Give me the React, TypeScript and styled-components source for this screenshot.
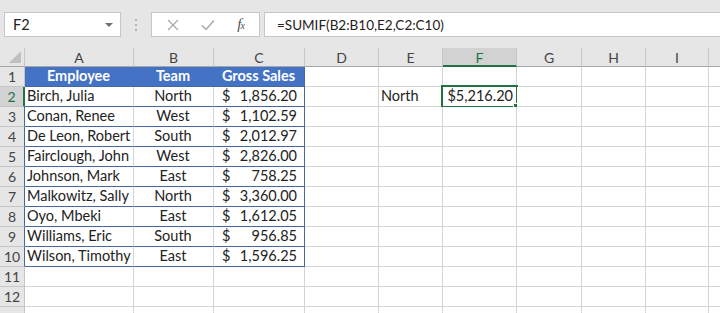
import { Fragment } from 'react';
import styled, { createGlobalStyle } from 'styled-components';

const GlobalStyle = createGlobalStyle`
  html, body {
    margin: 0;
    padding: 0;
    background: #ffffff;
    overflow: hidden;
  }
  body {
    font-family: Lato, "Open Sans", "Liberation Sans", sans-serif;
    color: #222;
  }
`;

const GRID = '#d4d4d4';
const HEAD_LINE = '#c6c6c6';
const TABLE_LINE = '#44699f';
const GREEN = '#217346';

const Window = styled.div`
  width: 720px;
  height: 313px;
  overflow: hidden;
  background: #fff;
`;

const Toolbar = styled.div`
  display: flex;
  align-items: stretch;
  height: 48px;
  box-sizing: border-box;
  padding: 12px 0 11px 4px;
  background: #e6e6e6;
`;

const NameBox = styled.div`
  width: 117px;
  box-sizing: border-box;
  display: flex;
  align-items: center;
  justify-content: space-between;
  padding: 0 7px 0 8px;
  background: #fff;
  border: 1px solid #c6c6c6;
  font-size: 14.5px;
`;

const Caret = styled.span`
  width: 0;
  height: 0;
  border-left: 4px solid transparent;
  border-right: 4px solid transparent;
  border-top: 4px solid #707070;
  margin-top: 1px;
`;

const Grip = styled.div`
  width: 30px;
  display: flex;
  flex-direction: column;
  align-items: center;
  justify-content: center;
  gap: 3px;
`;

const GripDot = styled.span`
  width: 2px;
  height: 2px;
  background: #b4b4b4;
`;

const FxBox = styled.div`
  width: 109px;
  box-sizing: border-box;
  display: flex;
  align-items: center;
  justify-content: space-around;
  padding: 0 4px;
  background: #fff;
  border: 1px solid #c6c6c6;
  margin-right: 4px;
`;

const FxLabel = styled.span`
  font-family: "Liberation Serif", serif;
  font-style: italic;
  font-size: 15px;
  color: #505050;
  letter-spacing: -1px;
  small {
    font-size: 10px;
  }
`;

const FormulaInput = styled.div`
  flex: 1;
  display: flex;
  align-items: center;
  padding-left: 12px;
  background: #fff;
  border: 1px solid #c6c6c6;
  border-right: none;
  font-size: 13.5px;
`;

const Sheet = styled.div`
  display: grid;
  grid-template-columns: 25px 109px 80px 91px 74px 64px 74px 65px 64px 63px 64px;
  grid-template-rows: 19px repeat(13, 20px);
`;

const Corner = styled.div`
  position: relative;
  background: #e6e6e6;
  border-right: 1px solid ${HEAD_LINE};
  border-bottom: 1px solid #a6a6a6;
  box-sizing: border-box;
  svg {
    position: absolute;
    right: 3px;
    bottom: 3px;
  }
`;

const ColHeader = styled.div<{ $active?: boolean }>`
  box-sizing: border-box;
  display: flex;
  align-items: center;
  justify-content: center;
  font-size: 14px;
  background: ${({ $active }) => ($active ? '#d2d2d2' : '#e6e6e6')};
  color: ${({ $active }) => ($active ? GREEN : '#444')};
  border-right: 1px solid ${HEAD_LINE};
  border-bottom: ${({ $active }) => ($active ? `2px solid ${GREEN}` : '1px solid #a6a6a6')};
  padding-top: ${({ $active }) => ($active ? '1px' : '0')};
`;

const RowHeader = styled.div<{ $active?: boolean; $edge?: boolean }>`
  box-sizing: border-box;
  display: flex;
  align-items: center;
  justify-content: center;
  font-size: 14px;
  background: ${({ $active }) => ($active ? '#d2d2d2' : '#e6e6e6')};
  color: ${({ $active }) => ($active ? GREEN : '#444')};
  border-bottom: 1px solid ${HEAD_LINE};
  border-right: ${({ $active, $edge }) =>
    $active ? `2px solid ${GREEN}` : `1px solid ${$edge ? TABLE_LINE : HEAD_LINE}`};
`;

type Tone = 'plain' | 'head' | 'body';

const Cell = styled.div<{ $align?: 'left' | 'center' | 'right'; $tone?: Tone; $edge?: boolean }>`
  position: relative;
  box-sizing: border-box;
  display: flex;
  align-items: flex-end;
  justify-content: ${({ $align }) =>
    $align === 'center' ? 'center' : $align === 'right' ? 'flex-end' : 'flex-start'};
  padding: 0 3px 1px 2px;
  font-size: 14.5px;
  line-height: 18px;
  white-space: nowrap;
  overflow: visible;
  background: ${({ $tone }) => ($tone === 'head' ? '#4472c4' : '#fff')};
  color: ${({ $tone }) => ($tone === 'head' ? '#fff' : '#222')};
  font-weight: ${({ $tone }) => ($tone === 'head' ? 700 : 400)};
  border-bottom: 1px solid ${({ $tone }) => ($tone === 'body' || $tone === 'head' ? TABLE_LINE : GRID)};
  border-right: 1px solid ${({ $edge, $tone }) => ($edge ? TABLE_LINE : $tone === 'head' ? '#4472c4' : GRID)};
`;

const Money = styled.div`
  flex: 1;
  display: flex;
  justify-content: space-between;
  padding: 0 4px 0 6px;
`;

const Selection = styled.div`
  position: absolute;
  left: -2px;
  top: -2px;
  right: -2px;
  bottom: -2px;
  border: 2px solid ${GREEN};
  pointer-events: none;
`;

const FillHandle = styled.span`
  position: absolute;
  right: -4px;
  bottom: -4px;
  width: 5px;
  height: 5px;
  background: ${GREEN};
  border: 1px solid #fff;
`;

const columns = ['A', 'B', 'C', 'D', 'E', 'F', 'G', 'H', 'I', 'J'];

const sales: [string, string, string][] = [
  ['Birch, Julia', 'North', '1,856.20'],
  ['Conan, Renee', 'West', '1,102.59'],
  ['De Leon, Robert', 'South', '2,012.97'],
  ['Fairclough, John', 'West', '2,826.00'],
  ['Johnson, Mark', 'East', '758.25'],
  ['Malkowitz, Sally', 'North', '3,360.00'],
  ['Oyo, Mbeki', 'East', '1,612.05'],
  ['Williams, Eric', 'South', '956.85'],
  ['Wilson, Timothy', 'East', '1,596.25'],
];

const EmptyCells = ({ from }: { from: number }) => (
  <>
    {columns.slice(from).map((c) => (
      <Cell key={c} />
    ))}
  </>
);

export default function App() {
  return (
    <Window>
      <GlobalStyle />
      <Toolbar>
        <NameBox>
          F2
          <Caret />
        </NameBox>
        <Grip>
          <GripDot />
          <GripDot />
          <GripDot />
        </Grip>
        <FxBox>
          <svg width="12" height="12" viewBox="0 0 12 12">
            <path d="M1 1 L11 11 M11 1 L1 11" stroke="#a8a8a8" strokeWidth="1.3" fill="none" />
          </svg>
          <svg width="14" height="12" viewBox="0 0 14 12">
            <path d="M1 6.5 L5 10.5 L13 1.5" stroke="#a8a8a8" strokeWidth="1.5" fill="none" />
          </svg>
          <FxLabel>
            f<small>x</small>
          </FxLabel>
        </FxBox>
        <FormulaInput>=SUMIF(B2:B10,E2,C2:C10)</FormulaInput>
      </Toolbar>

      <Sheet>
        <Corner>
          <svg width="12" height="12" viewBox="0 0 12 12">
            <path d="M12 0 L12 12 L0 12 Z" fill="#bfbfbf" />
          </svg>
        </Corner>
        {columns.map((c) => (
          <ColHeader key={c} $active={c === 'F'}>
            {c === 'J' ? '' : c}
          </ColHeader>
        ))}

        <RowHeader>1</RowHeader>
        <Cell $tone="head" $align="center">Employee</Cell>
        <Cell $tone="head" $align="center">Team</Cell>
        <Cell $tone="head" $align="center" $edge>Gross Sales</Cell>
        <EmptyCells from={3} />

        {sales.map(([name, team, amount], i) => (
          <Fragment key={name}>
            <RowHeader $active={i === 0} $edge>
              {i + 2}
            </RowHeader>
            <Cell $tone="body">{name}</Cell>
            <Cell $tone="body" $align="center">{team}</Cell>
            <Cell $tone="body" $edge>
              <Money>
                <span>$</span>
                <span>{amount}</span>
              </Money>
            </Cell>
            {i === 0 ? (
              <>
                <Cell />
                <Cell>North</Cell>
                <Cell $align="right">
                  $5,216.20
                  <Selection>
                    <FillHandle />
                  </Selection>
                </Cell>
                <EmptyCells from={6} />
              </>
            ) : (
              <EmptyCells from={3} />
            )}
          </Fragment>
        ))}

        {[11, 12, 13].map((r) => (
          <Fragment key={r}>
            <RowHeader>{r === 13 ? '' : r}</RowHeader>
            <EmptyCells from={0} />
          </Fragment>
        ))}
      </Sheet>
    </Window>
  );
}
